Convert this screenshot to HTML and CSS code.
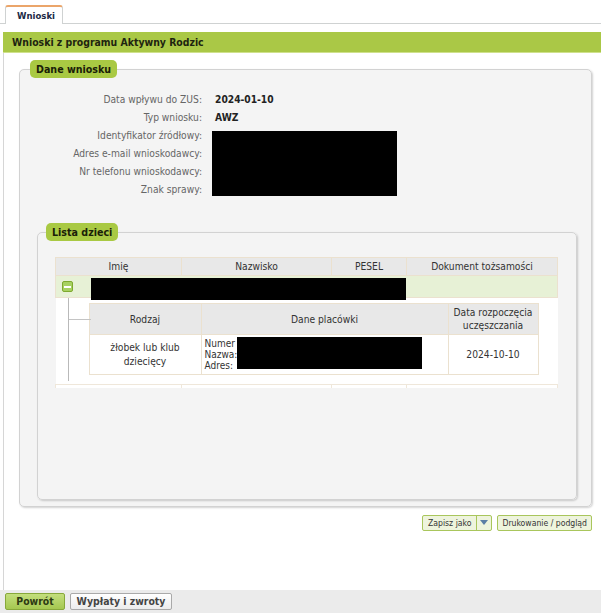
FILE: index.html
```html
<!DOCTYPE html>
<html lang="pl">
<head>
<meta charset="utf-8">
<title>Wnioski</title>
<link rel="stylesheet" href="styles.css">
</head>
<body>
<div class="tabs"><div class="tab">Wnioski</div><div class="tabline"></div></div>
<div class="titlebar">Wnioski z programu Aktywny Rodzic</div>
<div class="main">
  <fieldset class="fs outer">
    <legend class="pill">Dane wniosku</legend>
    <div class="details">
      <div class="lbl">Data wpływu do ZUS:</div><div class="val">2024-01-10</div>
      <div class="lbl">Typ wniosku:</div><div class="val">AWZ</div>
      <div class="lbl">Identyfikator źródłowy:</div><div class="redact"></div>
      <div class="lbl">Adres e-mail wnioskodawcy:</div>
      <div class="lbl">Nr telefonu wnioskodawcy:</div>
      <div class="lbl">Znak sprawy:</div>
    </div>
    <fieldset class="fs inner">
      <legend class="pill">Lista dzieci</legend>
      <table class="grid main-table">
        <colgroup><col class="c1"><col class="c2"><col class="c3"><col class="c4"></colgroup>
        <thead>
          <tr><th>Imię</th><th>Nazwisko</th><th>PESEL</th><th>Dokument tożsamości</th></tr>
        </thead>
        <tbody>
          <tr class="child">
            <td colspan="4" class="child-cell"><span class="minus"></span><span class="redact-row"></span></td>
          </tr>
          <tr class="detail">
            <td colspan="4" class="detail-cell">
              <div class="tree">
                <div class="branch"></div>
                <table class="grid sub">
                  <colgroup><col class="s1"><col class="s2"><col class="s3"></colgroup>
                  <thead>
                    <tr><th>Rodzaj</th><th>Dane placówki</th><th>Data rozpoczęcia uczęszczania</th></tr>
                  </thead>
                  <tbody>
                    <tr>
                      <td class="center">żłobek lub klub dziecięcy</td>
                      <td class="place"><div>Numer</div><div>Nazwa:</div><div>Adres:</div><span class="redact-place"></span></td>
                      <td class="center">2024-10-10</td>
                    </tr>
                  </tbody>
                </table>
              </div>
            </td>
          </tr>
          <tr class="foot"><td></td><td></td><td></td><td></td></tr>
        </tbody>
      </table>
    </fieldset>
  </fieldset>
  <div class="actions">
    <div class="split"><span class="btn-main">Zapisz jako</span><span class="btn-arrow"></span></div>
    <div class="btn-sm">Drukowanie / podgląd</div>
  </div>
</div>
<div class="bottombar">
  <div class="btn btn-green">Powrót</div>
  <div class="btn btn-gray">Wypłaty i zwroty</div>
</div>
</body>
</html>
```
FILE: styles.css
```css
html, body {
  margin: 0;
  padding: 0;
  background: #fff;
}
body {
  font-family: "DejaVu Sans Condensed", "DejaVu Sans", Verdana, sans-serif;
  font-size: 10.2px;
  color: #333;
  width: 601px;
  height: 613px;
  overflow: hidden;
  display: flex;
  flex-direction: column;
}
.tabs {
  display: flex;
  align-items: flex-end;
  height: 24px;
  padding-left: 5px;
  box-sizing: border-box;
  border-bottom: 1px solid #cfd2d2;
}
.tab {
  width: 58px;
  box-sizing: border-box;
  border: 1px solid #cfd2d2;
  border-top: 2px solid #eba56a;
  border-bottom: none;
  border-radius: 3px 3px 0 0;
  background: #fff;
  margin-bottom: -1px;
  height: 19px;
  font-weight: bold;
  font-size: 9.5px;
  color: #1c2a45;
  padding-left: 11px;
  line-height: 17px;
}
.tabline { flex: 1; }
.titlebar {
  margin-top: 8px;
  margin-left: 3px;
  height: 20px;
  background: #aac846;
  border-bottom: 1px solid #cfe18c;
  font-weight: bold;
  font-size: 10.4px;
  color: #1e2410;
  padding-left: 9px;
  line-height: 20px;
}
.main {
  margin-left: 3px;
  border-left: 1px solid #d6d6d6;
  flex: 1;
  display: flex;
  flex-direction: column;
}
.fs {
  border: 1px solid #d2d2d2;
  border-radius: 5px;
  background: #f4f4f4;
  box-shadow: 1px 1px 2px rgba(0,0,0,0.18);
  padding: 0;
  margin: 0;
  min-width: 0;
}
.outer {
  margin: 7px 0 0 15px;
  width: 573px;
  box-sizing: border-box;
  padding-bottom: 6px;
}
.pill {
  background: #a9c943;
  border-radius: 5px;
  font-weight: bold;
  color: #1a2008;
  font-size: 10.6px;
  height: 18px;
  line-height: 18px;
  padding: 0 6px;
  margin-left: 10px;
  box-sizing: border-box;
}
.details {
  display: grid;
  grid-template-columns: 182px auto;
  grid-auto-rows: 18px;
  column-gap: 13px;
  padding-top: 13px;
  line-height: 18px;
}
.lbl {
  grid-column: 1;
  text-align: right;
  color: #666;
}
.val {
  grid-column: 2;
  font-weight: bold;
  color: #222;
}
.redact {
  grid-column: 2;
  grid-row: 3 / span 4;
  background: #000;
  width: 185px;
  margin: 4px 0 3px -3px;
}
.inner {
  margin: 24px 14px 0 17px;
  padding: 16px 18px 111px 17px;
}
.inner .pill { margin-left: -9px; }
.grid {
  border-collapse: collapse;
  table-layout: fixed;
}
.grid th {
  background: #e8e8e8;
  font-weight: normal;
  color: #333;
  text-align: center;
  border: 1px solid #ebe1cf;
  padding: 0 2px;
}
.main-table { width: 502px; }
.main-table th { height: 17px; }
.c1 { width: 126px; }
.c2 { width: 150px; }
.c3 { width: 75px; }
.c4 { width: 151px; }
.child td {
  background: #e7f1d6;
  height: 21px;
  border: 1px solid #ebe1cf;
  border-top: none;
  padding: 0;
}
.child-cell { position: relative; }
.minus {
  display: inline-block;
  vertical-align: middle;
  width: 11px;
  height: 11px;
  box-sizing: border-box;
  margin-left: 6px;
  border: 1px solid #7ea92f;
  border-radius: 2px;
  background: #a7d160 linear-gradient(#fff, #fff) no-repeat center / 7px 2px;
}
.redact-row {
  position: absolute;
  left: 35px;
  top: 2px;
  width: 315px;
  height: 22px;
  background: #000;
}
.detail td.detail-cell {
  background: #fff;
  padding: 0;
  border: none;
}
.tree {
  display: flex;
  padding: 5px 0 9px 33px;
  position: relative;
}
.branch {
  position: absolute;
  left: 12px;
  top: 0;
  bottom: 3px;
  width: 12px;
  border-left: 1px solid #b9b9b9;
}
.branch::after {
  content: "";
  position: absolute;
  left: 0;
  top: 21px;
  width: 22px;
  border-top: 1px solid #c4c4c4;
}
.sub { width: 449px; }
.s1 { width: 112px; }
.s2 { width: 247px; }
.s3 { width: 90px; }
.sub th { height: 30px; line-height: 13px; padding: 0 1px; }
.sub td {
  border: 1px solid #ebe1cf;
  height: 39px;
  background: #fff;
  color: #333;
  padding: 0 3px;
}
.sub td.center { text-align: center; line-height: 14px; }
.sub td.place {
  line-height: 11px;
  font-size: 10px;
  position: relative;
  vertical-align: middle;
}
.redact-place {
  position: absolute;
  left: 35px;
  top: 2px;
  width: 185px;
  height: 32px;
  background: #000;
}
.foot td {
  height: 3px;
  padding: 0;
  border-left: 1px solid #efe7da;
  border-right: 1px solid #efe7da;
  border-top: 1px solid #efe7da;
  background: #fff;
}
.actions {
  display: flex;
  justify-content: flex-end;
  gap: 5px;
  margin-top: 8px;
  width: 588px;
}
.split {
  display: flex;
  height: 16px;
  box-sizing: border-box;
  border: 1px solid #a9c65c;
  border-radius: 2px;
  background: #eef4dd;
  font-size: 8.6px;
  line-height: 14px;
  color: #333;
}
.btn-main {
  padding: 0 5px;
  border-right: 1px solid #a9c65c;
}
.btn-arrow {
  width: 14px;
  position: relative;
}
.btn-arrow::after {
  content: "";
  position: absolute;
  left: 3px;
  top: 4px;
  border-left: 4px solid transparent;
  border-right: 4px solid transparent;
  border-top: 5px solid #5b7fa6;
}
.btn-sm {
  height: 16px;
  box-sizing: border-box;
  border: 1px solid #a9c65c;
  border-radius: 2px;
  background: #eef4dd;
  font-size: 8.6px;
  line-height: 14px;
  padding: 0 4px;
  color: #333;
}
.bottombar {
  height: 23px;
  background: #ebebeb;
  display: flex;
  align-items: center;
  gap: 5px;
  padding-left: 5px;
}
.btn {
  height: 17px;
  box-sizing: border-box;
  border-radius: 2px;
  font-weight: bold;
  font-size: 10.4px;
  line-height: 15px;
  text-align: center;
}
.btn-green {
  width: 60px;
  border: 1px solid #87a83a;
  background: linear-gradient(#c3de7d, #a5c850);
  color: #2d3a12;
}
.btn-gray {
  width: 102px;
  border: 1px solid #a9a9a9;
  background: linear-gradient(#ffffff, #ececec);
  color: #444;
}
```
